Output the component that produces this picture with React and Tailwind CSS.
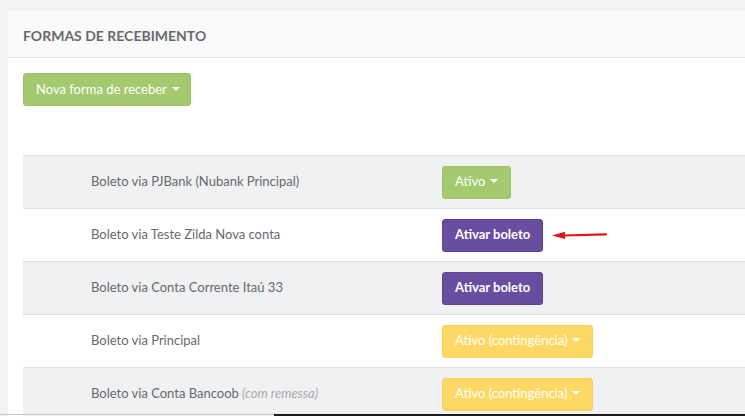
import React from "react";

const Caret = () => (
  <span className="ml-[5px] inline-block w-0 h-0 border-l-[4px] border-r-[4px] border-t-[4px] border-l-transparent border-r-transparent border-t-white align-middle relative top-[-1px]" />
);

const rows = [
  { label: "Boleto via PJBank (Nubank Principal)", btn: "green", text: "Ativo", caret: true, bg: "bg-[#f0f1f3]" },
  { label: "Boleto via Teste Zilda Nova conta", btn: "purple", text: "Ativar boleto", arrow: true, bg: "bg-white" },
  { label: "Boleto via Conta Corrente Itaú 33", btn: "purple", text: "Ativar boleto", bg: "bg-[#f0f1f3]" },
  { label: "Boleto via Principal", btn: "yellow", text: "Ativo (contingência)", caret: true, bg: "bg-white" },
  { label: "Boleto via Conta Bancoob", extra: "(com remessa)", btn: "yellow", text: "Ativo (contingência)", caret: true, bg: "bg-[#f0f1f3]" },
];

const btnCls = {
  green: "bg-[#a4c96e] border-[#9cc265]",
  purple: "bg-[#684ea0] border-[#5c4492] font-bold",
  yellow: "bg-[#fed865] border-[#f8d05d]",
};

export default function App() {
  return (
    <div className="w-[745px] h-[416px] overflow-hidden bg-[#f1f2f4] relative" style={{ fontFamily: "Lato, 'Open Sans', sans-serif" }}>
      <div className="pt-[11px] pl-[8px]">
        <div className="bg-white w-[760px] h-[420px]">
          <div className="h-[47px] bg-[#fafafa] border-b border-[#e7e7e7] flex items-center pl-[15px]">
            <span className="text-[14px] font-bold text-[#676a6c] relative top-[1px]">FORMAS DE RECEBIMENTO</span>
          </div>
          <div className="pl-[15px] pt-[15px]">
            <button className="h-[33px] pl-[12px] pr-[10px] rounded-[3px] border bg-[#a4c96e] border-[#9cc265] text-white text-[13px] flex items-center">
              Nova forma de receber<Caret />
            </button>
          </div>
          <div className="ml-[15px] mt-[49px] border-t border-[#e0e1e3]">
            {rows.map((r, i) => (
              <div key={i} className={`h-[53px] border-b border-[#e0e1e3] flex items-center ${r.bg}`}>
                <div className="w-[419px] pl-[68px] text-[13px] text-[#676a6c]">
                  {r.label}
                  {r.extra && <span className="italic text-[#aaaaaa]"> {r.extra}</span>}
                </div>
                <div className="flex items-center">
                  <button className={`h-[33px] px-[12px] rounded-[3px] border text-white text-[13px] flex items-center ${btnCls[r.btn]}`}>
                    {r.text}
                    {r.caret && <Caret />}
                  </button>
                  {r.arrow && (
                    <svg width="60" height="12" viewBox="0 0 60 12" className="ml-[7px]">
                      <path d="M14 6.5 L56 5.3" stroke="#e8111b" strokeWidth="2.2" strokeLinecap="round" />
                      <path d="M2 6.6 L15 2.8 L15 10 Z" fill="#e8111b" />
                    </svg>
                  )}
                </div>
              </div>
            ))}
          </div>
        </div>
      </div>
      <div className="absolute left-0 bottom-0 w-full h-[2px] flex">
        <div className="w-[274px] bg-[#c8c8c8] h-[1px] mt-0" />
        <div className="flex-1 bg-[#1e1e1e]" />
      </div>
    </div>
  );
}
